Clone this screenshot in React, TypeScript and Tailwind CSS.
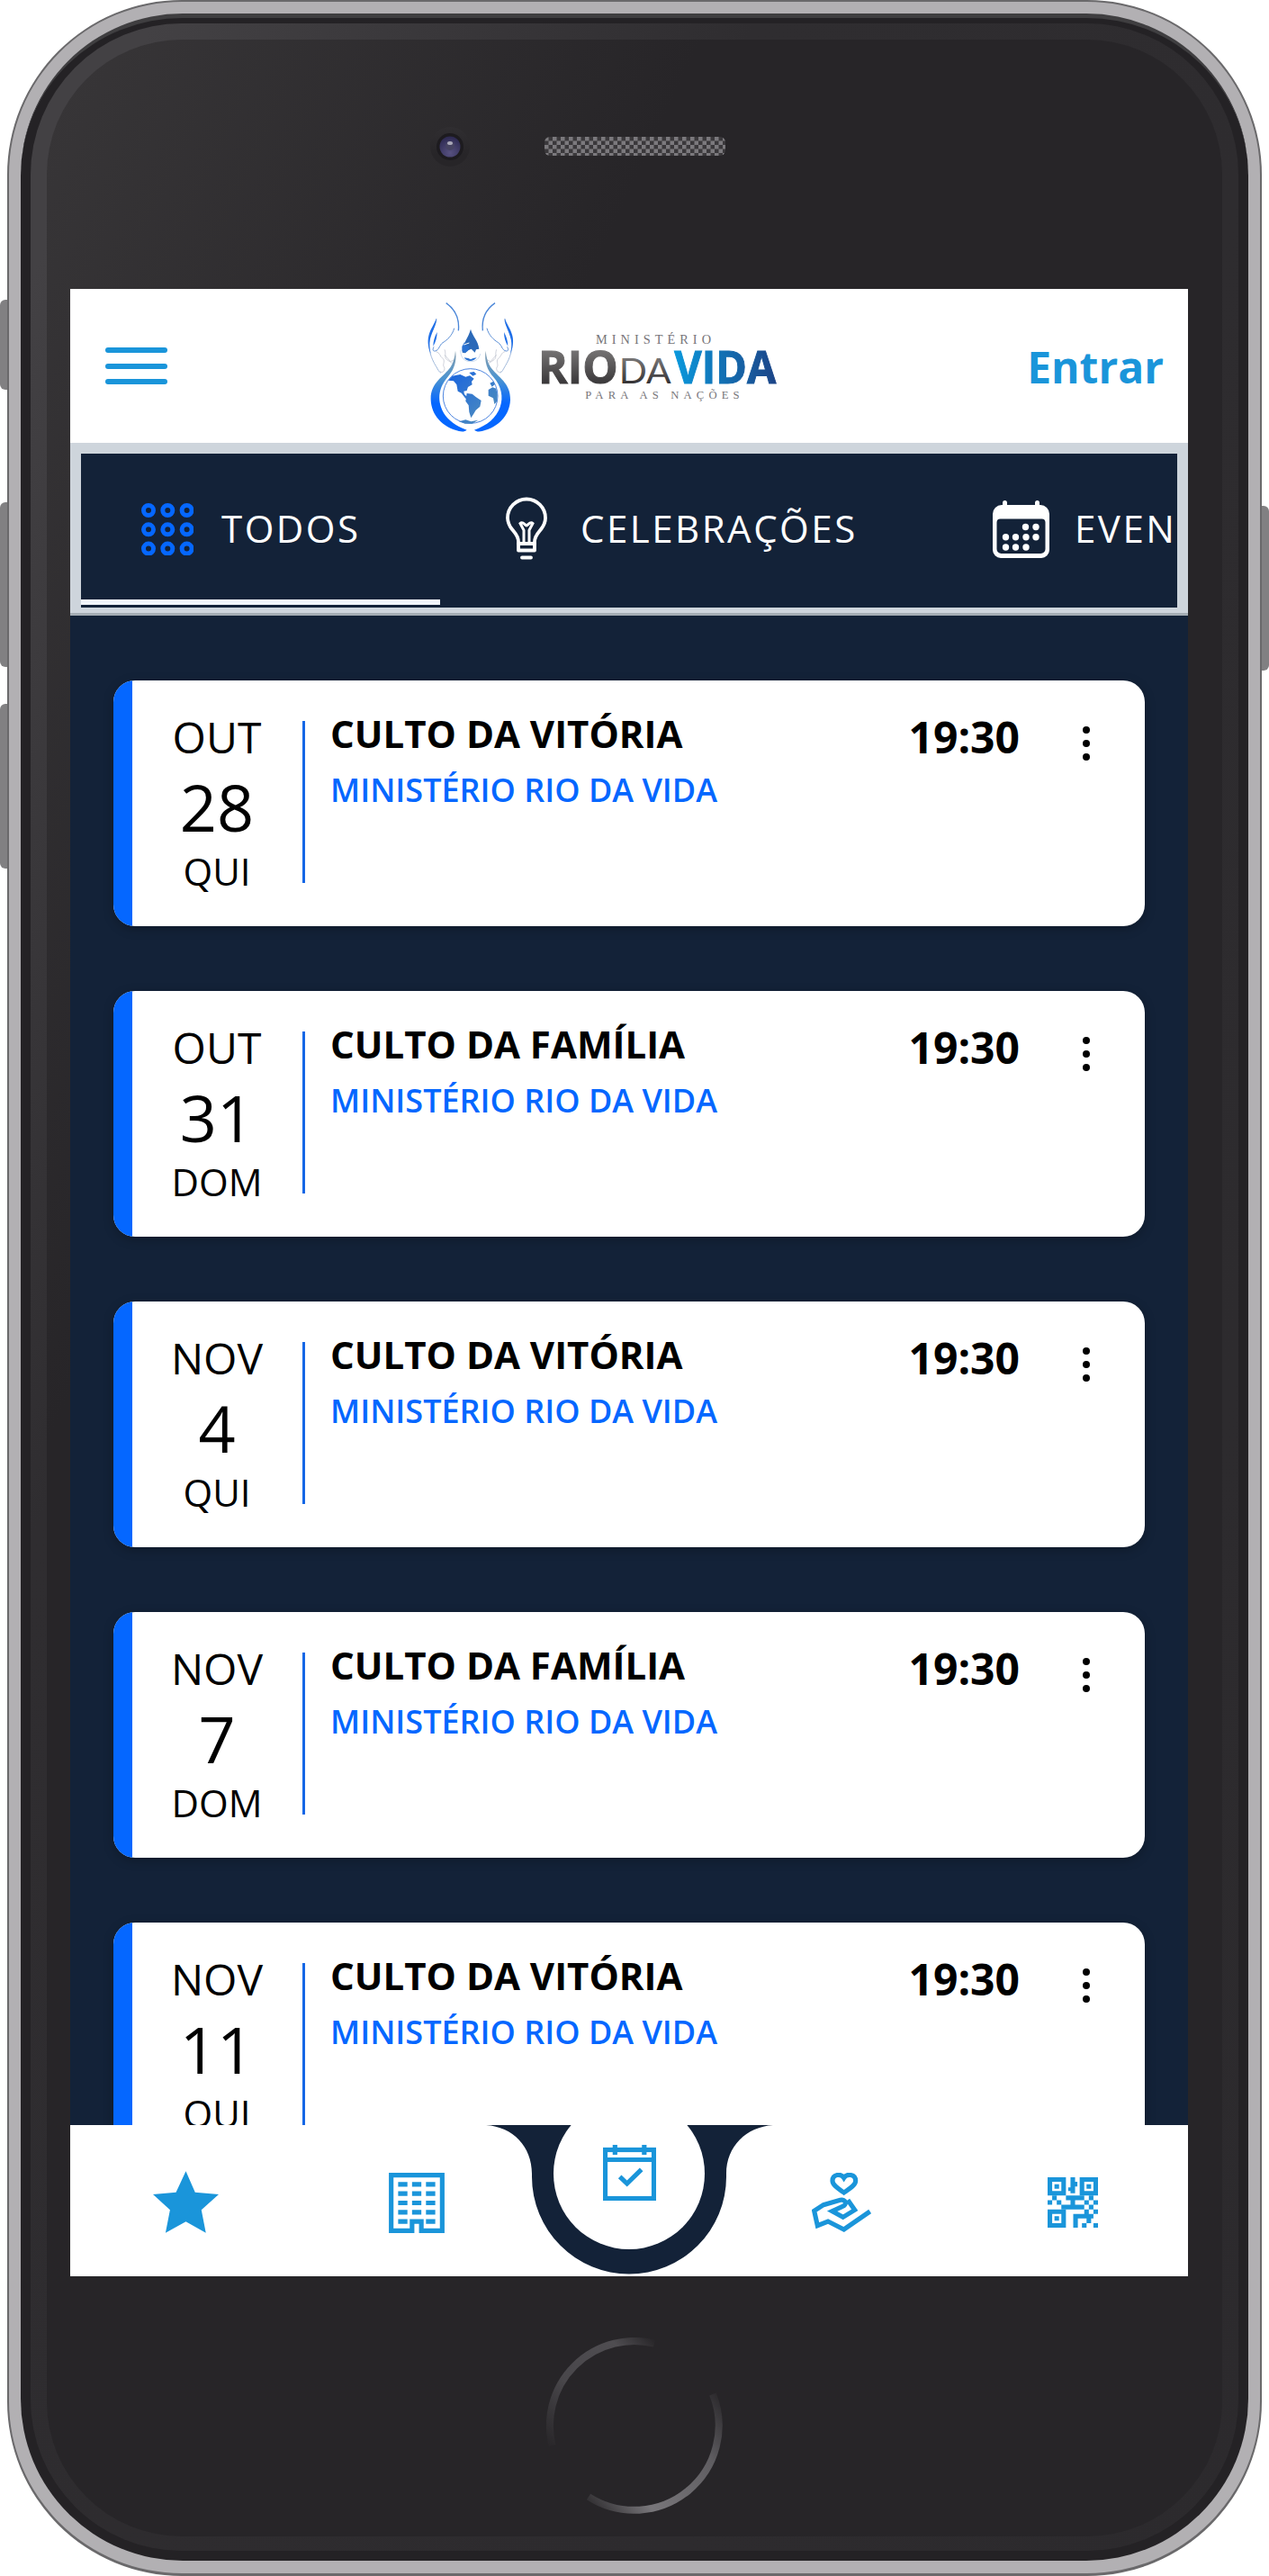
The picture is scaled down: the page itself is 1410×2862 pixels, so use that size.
import { ReactNode } from "react";
import clsx from "clsx";

interface ChurchEvent {
  month: string;
  day: number;
  weekday: string;
  title: string;
  place: string;
  time: string;
}

const PLACE = "MINISTÉRIO RIO DA VIDA";

const events: ChurchEvent[] = [
  { month: "OUT", day: 28, weekday: "QUI", title: "CULTO DA VITÓRIA", place: PLACE, time: "19:30" },
  { month: "OUT", day: 31, weekday: "DOM", title: "CULTO DA FAMÍLIA", place: PLACE, time: "19:30" },
  { month: "NOV", day: 4, weekday: "QUI", title: "CULTO DA VITÓRIA", place: PLACE, time: "19:30" },
  { month: "NOV", day: 7, weekday: "DOM", title: "CULTO DA FAMÍLIA", place: PLACE, time: "19:30" },
  { month: "NOV", day: 11, weekday: "QUI", title: "CULTO DA VITÓRIA", place: PLACE, time: "19:30" },
];

/* Icons */

function GridIcon() {
  const steps = [8, 29.3, 50.6];
  return (
    <svg viewBox="0 0 58.6 58.6" className="w-[58.6px] h-[58.6px]" fill="none" stroke="#0567ff" strokeWidth="5">
      {steps.map((cy) => steps.map((cx) => <circle key={`${cx}-${cy}`} cx={cx} cy={cy} r="5.5" />))}
    </svg>
  );
}

function BulbIcon() {
  return (
    <svg viewBox="0 0 48 72" className="w-12 h-[72px]" fill="none" stroke="#fff" strokeWidth="3.8" strokeLinecap="round">
      <path d="M15 58v-8c0-7-4-10-7.500-14.500A21 21 0 0 1 3 23.500a21 21 0 0 1 42 0c0 4-1.500 8-4.500 12S33 43 33 50v8" />
      <path d="M15 52h18M15 59.500h18M19 67.500h10" />
      <path d="M21 51V37l-4-7.500c3-3 5.500 2.500 7 2.500s4-5.500 7-2.500L27 37v14" strokeWidth="3" />
    </svg>
  );
}

function CalendarDotsIcon() {
  const dots = [
    [36.5, 29.5], [48, 29.5],
    [14.5, 40.7], [25.5, 40.7], [37, 40.7], [48, 40.7],
    [14.5, 52], [25.5, 52], [37, 52],
  ];
  return (
    <svg viewBox="0 0 63 65" className="w-[63px] h-[65px]" fill="#fff">
      <path
        fillRule="evenodd"
        d="M10 5h43a10 10 0 0 1 10 10v40a9 9 0 0 1-9 9H9a9 9 0 0 1-9-9V15A10 10 0 0 1 10 5zM8.500 20.500a4 4 0 0 0-4 4V54a5 5 0 0 0 5 5h44a5 5 0 0 0 5-5V24.500a4 4 0 0 0-4-4z"
      />
      <rect x="11" y="0" width="5" height="10" rx="2.5" />
      <rect x="47" y="0" width="5" height="10" rx="2.5" />
      {dots.map(([cx, cy]) => (
        <circle key={`${cx}-${cy}`} cx={cx} cy={cy} r="3.7" />
      ))}
    </svg>
  );
}

function StarIcon() {
  return (
    <svg viewBox="330 277 220 207" className="w-[73px] h-[69px]" fill="#1a95da">
      <path d="M440 277l31 71 79 7-58 52 15 77-67-38-68 38 15-77-57-52 77-7z" />
    </svg>
  );
}

function BuildingIcon() {
  return (
    <svg viewBox="0 0 12 13" className="w-[62px] h-[67px]" fill="#1a95da">
      <path fillRule="evenodd" d="M0 0h12v13H6.500v-2h-1v2H0zM1 1v11h3.500v-2h3v2H11V1z" />
      {[2, 4, 6, 8].map((y) => (
        <path key={y} d={`M2 ${y}h2v1H2zM5 ${y}h2v1H5zM8 ${y}h2v1H8z`} />
      ))}
      <path d="M2 10h2v1H2zM8 10h2v1H8z" />
    </svg>
  );
}

function CalendarCheckIcon() {
  return (
    <svg viewBox="508 189 177 186" className="w-[59px] h-[62px]" fill="none" stroke="#1a95da" strokeWidth="15.5">
      <rect x="515.5" y="205.5" width="162" height="162" />
      <path d="M515 238.500h163M548 189v33M645.500 189v33M564 295l24 23 48-47" />
    </svg>
  );
}

function GivingIcon() {
  return (
    <svg viewBox="127 282 198 198" className="w-[66px] h-[66px]" fill="none" stroke="#1a95da" strokeWidth="15.5">
      <path d="M234 348c-14-10-38-24-38-39 0-22 28-26 38-10 10-16 39-12 39 10 0 15-25 29-39 39z" />
      <path d="M321 411l-87 60-53-27-35 14-11-49 31-20 56-16c18-4 25 15 6 22l-33 15 36 20 39-24-23-33" />
    </svg>
  );
}

function QrIcon() {
  return (
    <svg viewBox="0 0 11 11" className="w-[56px] h-[56px]" fill="#1a95da">
      {["0 0", "7 0", "0 7"].map((at) => (
        <path
          key={at}
          transform={`translate(${at})`}
          fillRule="evenodd"
          d="M0 0h4v4H0zM1 1v2h2V1zM1.500 1.500h1v1h-1z"
        />
      ))}
      <path d="M5 0h1v1h.5v1H6v1.500H5V3h-.5V2.200H5z" />
      <path d="M1 4h1v1H1zM0 5h1v1H0zM2 5h1v1H2zM4 4h4v1H6v1h2v1H3V6h2V5H4z" />
      <path d="M9 4h1v1H9zM8 5h1v1H8zM10 5h1v1h-1zM9 6h1v1H9zM8 7h1v1h1v1h-.5v1h-1V9H6.600v2h-1V8H8zM10 7h1v1h-1z" />
      <path d="M7.500 10h1v1h-1zM10 10h1v1h-1z" />
    </svg>
  );
}

function Logo() {
  return (
    <svg viewBox="60 22 1200 480" className="w-[400px] h-[160px]">
      <defs>
        <linearGradient id="water" x1="0" y1="0" x2="0" y2="1">
          <stop offset="0" stopColor="#8aa0ae" />
          <stop offset="0.35" stopColor="#4b93d0" />
          <stop offset="0.65" stopColor="#0567ff" />
        </linearGradient>
        <linearGradient id="steel" x1="0" y1="0" x2="0" y2="1">
          <stop offset="0.2" stopColor="#7b7979" />
          <stop offset="0.85" stopColor="#333133" />
        </linearGradient>
        <linearGradient id="vida" x1="0" y1="0" x2="1" y2="0">
          <stop offset="0" stopColor="#0a98dc" />
          <stop offset="1" stopColor="#1c4487" />
        </linearGradient>
        <linearGradient id="land" x1="0" y1="0" x2="1" y2="1">
          <stop offset="0" stopColor="#1763e0" />
          <stop offset="1" stopColor="#5793b8" />
        </linearGradient>
        {/* One half of the emblem: arm, hand and water, mirrored for the other side */}
        <g id="half">
          <path d="M137 51c34 24 45 54 41 92" stroke="#4a86d8" strokeWidth="4" fill="none" />
          <path d="M105 103c-1 22-20 44-24 70-4 32 6 62 22 88 6 10 10 20 17 23" stroke="#8eabd2" strokeWidth="2.5" fill="none" />
          <path d="M104 102c4 20-20 50-22 82-1 14 2 28 5 38-9-18-13-42-8-62 5-22 20-40 25-58z" fill="#1f6fe8" />
          <path d="M107 148c0 16-4 32-13 47 0-17 5-32 13-47z" fill="#1f6fe8" />
          <path d="M164 135c-6 24-24 40-38 48-12 8-12 26-26 28-8 1-8-6-4-14" stroke="#5c8fd6" strokeWidth="3" fill="none" />
          <path d="M103 213c14 2 12 16 24 24 8 8-4 22 4 28 4 10-6 22-14 14M132 206c6 16-2 26 8 34l18 12M132 224l20 22 12-6" stroke="#b7bbc8" strokeWidth="2" fill="none" />
          <path
            d="M168 210c6 36-6 66-26 88-26 30-34 66-22 100 12 36 44 62 86 76-6 6-16 6-26 4-54-12-92-52-94-104-2-58 42-76 66-110 10-16 14-34 16-54z"
            fill="url(#water)"
          />
        </g>
      </defs>

      <use href="#half" />
      <use href="#half" transform="translate(437 0) scale(-1 1)" />

      {/* Drop */}
      <path d="M219 138c6 24 26 40 28 66l-10 2-4 10-12-12-14 6-6 8-10-2c0-30 20-48 28-78z" fill="#2b69b8" />
      <path d="M190 196l8-14 6 10 10 4-4 14-8 6-12-4zM197 233l14 2 8 4 8-4 12-2c-10 14-32 16-42 0z" fill="#2a72d2" />
      <path d="M196 190l18-6" stroke="#fff" strokeWidth="3" />
      <path d="M185 208c0 26 14 38 33 38s30-10 33-26" stroke="#9db9dd" strokeWidth="1.5" fill="none" />

      {/* Globe */}
      <circle cx="218" cy="361" r="91" fill="none" stroke="#2a6cd8" strokeWidth="2.5" />
      <path
        d="M158 294l26-5 18 8 14-4 14 10-8 10 2 10-14 8-4 12-10 2 2 10 12 12-8 2-14-18-12-6-4-22-10-12-18-2zM214 283l16-3 8 8-12 6zM206 352l18 2 12 10 18 12-4 20-14 12-8 14-8 12-6-20-2-22-10-14zM283 318l12-6 5 10-10 8zM278 340l14-8 12 4 4 22-2 22-8 8-4-20-16-8zM180 446l22-6 18 6 24-5-20 12h-24z"
        fill="url(#land)"
      />

      <g fontFamily="'Open Sans', sans-serif">
        <text x="444" y="318" fontSize="151" fontWeight="700" textLength="266" lengthAdjust="spacingAndGlyphs" fill="url(#steel)" stroke="url(#steel)" strokeWidth="3">
          RIO
        </text>
        <text x="713" y="319" fontSize="118" fontFamily="Lato, sans-serif" fontWeight="400" textLength="174" lengthAdjust="spacingAndGlyphs" fill="url(#steel)">
          DA
        </text>
        <text x="898" y="318" fontSize="151" fontWeight="700" textLength="339" lengthAdjust="spacingAndGlyphs" fill="url(#vida)" stroke="url(#vida)" strokeWidth="3">
          VIDA
        </text>
      </g>
      <g fontFamily="'Liberation Serif', serif" fill="#77757a">
        <text x="636" y="188" fontSize="43" textLength="384">
          MINISTÉRIO
        </text>
        <text x="601" y="371" fontSize="38" textLength="514">
          PARA AS NAÇÕES
        </text>
      </g>
    </svg>
  );
}

/* App screen */

function Header() {
  return (
    <header className="h-[171px] shrink-0 bg-white pl-[39px] pr-[27px] grid grid-cols-[353px_400px_1fr] items-center">
      <div className="w-[69px] flex flex-col gap-[11.5px]">
        <span className="h-[6px] rounded-full bg-[#1a95da]" />
        <span className="h-[6px] rounded-full bg-[#1a95da]" />
        <span className="h-[6px] rounded-full bg-[#1a95da]" />
      </div>
      <Logo />
      <a className="justify-self-end pt-[3px] text-[48px] leading-none font-bold text-[#1a95da]">Entrar</a>
    </header>
  );
}

interface TabProps {
  icon: ReactNode;
  label: string;
  className: string;
  active?: boolean;
}

function Tab({ icon, label, className, active }: TabProps) {
  return (
    <div
      className={clsx(
        "h-[168px] shrink-0 pl-[60px] flex items-center border-b-[6px]",
        active ? "border-[#f1f5fb]" : "border-transparent",
        className,
      )}
    >
      <div className="w-[72px] mt-[6px] flex justify-center">{icon}</div>
      <span className="ml-6 mt-[3px] text-[42px] leading-none tracking-[2.5px] text-white">{label}</span>
    </div>
  );
}

function Tabs() {
  return (
    <div className="shrink-0 h-[192px] bg-[#ced5dc] border-b-[3px] border-[#a4adb4] px-3 pt-3 pb-[6px]">
      <div className="h-[171px] bg-[#132238] flex overflow-hidden">
        <Tab icon={<GridIcon />} label="TODOS" className="w-[399px]" active />
        <Tab icon={<BulbIcon />} label="CELEBRAÇÕES" className="w-[549px]" />
        <Tab icon={<CalendarDotsIcon />} label="EVEN" className="w-[460px]" />
      </div>
    </div>
  );
}

function EventCard({ event }: { event: ChurchEvent }) {
  return (
    <div className="h-[273px] shrink-0 flex bg-white text-black rounded-[24px] overflow-hidden shadow-[0_3px_12px_rgba(0,0,0,0.25)]">
      <div className="w-[21px] bg-[#0567ff]" />
      {/* Date */}
      <div className="w-[189px] pt-8 pr-px text-center">
        <div className="text-[48px] leading-[62px]">{event.month}</div>
        <div className="text-[72px] leading-[92px]">{event.day}</div>
        <div className="text-[42px] leading-[51px]">{event.weekday}</div>
      </div>
      <div className="w-[3px] h-[180px] mt-[45px] bg-[#1567e6]" />
      {/* Details */}
      <div className="flex-1 pl-[28px] pt-[29px]">
        <div className="text-[42px] leading-[60px] font-bold">{event.title}</div>
        <div className="text-[36px] leading-[66px] font-semibold text-[#0567ff]">{event.place}</div>
      </div>
      <div className="pt-[33px] text-[48px] leading-[60px] font-bold">{event.time}</div>
      <div className="w-[8px] ml-[70px] mr-[61px] mt-[51px] flex flex-col gap-[7.5px]">
        <span className="size-[7.5px] rounded-full bg-black" />
        <span className="size-[7.5px] rounded-full bg-black" />
        <span className="size-[7.5px] rounded-full bg-black" />
      </div>
    </div>
  );
}

function BottomNav() {
  return (
    <nav className="relative h-[168px] shrink-0 bg-white flex">
      {/* Notch that holds the floating button */}
      <svg viewBox="0 0 319 168" className="absolute left-[462px] top-0 w-[319px] h-[168px]">
        <path d="M0 0c30 2 51 24 51 54v3.500a108 108 0 0 0 216 0V54c0-30 22-52 52-54z" fill="#132238" />
        <circle cx="159" cy="54" r="84" fill="#fff" />
      </svg>
      <div className="w-[257px] pt-[3px] flex items-center justify-center">
        <StarIcon />
      </div>
      <div className="w-[256px] pt-[4px] flex items-center justify-center">
        <BuildingIcon />
      </div>
      <div className="relative w-[216px] pt-[22px] flex items-start justify-center">
        <CalendarCheckIcon />
      </div>
      <div className="w-[256px] pt-[4px] flex items-center justify-center">
        <GivingIcon />
      </div>
      <div className="w-[257px] pt-[4px] flex items-center justify-center">
        <QrIcon />
      </div>
    </nav>
  );
}

function Screen() {
  return (
    <main className="w-[1242px] h-[2208px] flex flex-col overflow-hidden bg-[#132238]">
      <Header />
      <Tabs />
      <section className="flex-1 min-h-0 overflow-hidden px-12 pt-[72px] flex flex-col gap-[72px]">
        {events.map((event) => (
          <EventCard key={`${event.month}-${event.day}`} event={event} />
        ))}
      </section>
      <BottomNav />
    </main>
  );
}

/* Phone hardware */

function Camera() {
  return (
    <svg viewBox="0 0 44 44" className="size-11">
      <defs>
        <linearGradient id="rim" x1="0" y1="0" x2="0" y2="1">
          <stop offset="0" stopColor="#302e31" />
          <stop offset="0.7" stopColor="#272528" />
        </linearGradient>
        <radialGradient id="lens" cx="0.5" cy="0.8" r="0.8">
          <stop offset="0" stopColor="#575180" />
          <stop offset="1" stopColor="#2c2850" />
        </radialGradient>
      </defs>
      <circle cx="22" cy="22" r="22" fill="url(#rim)" />
      <circle cx="22" cy="22" r="15" fill="#1d1b1f" />
      <circle cx="22" cy="22" r="11.5" fill="url(#lens)" />
      <circle cx="22" cy="21" r="5" fill="#464362" />
      <ellipse cx="22" cy="18" rx="3" ry="2" fill="#a9a7b8" />
    </svg>
  );
}

function Speaker() {
  return (
    <svg viewBox="0 0 201 21" className="w-[201px] h-[21px]">
      <defs>
        <pattern id="mesh" width="9" height="9" patternUnits="userSpaceOnUse">
          <rect width="9" height="9" fill="#3a383b" />
          <rect width="4.5" height="4.5" fill="#7b797d" />
          <rect x="4.5" y="4.5" width="4.5" height="4.5" fill="#7b797d" />
        </pattern>
      </defs>
      <rect width="201" height="21" rx="6" fill="url(#mesh)" />
    </svg>
  );
}

function HomeButton() {
  return (
    <svg viewBox="0 0 196 196" className="size-[196px]" fill="none" strokeWidth="8">
      <defs>
        <linearGradient id="homeTop" gradientUnits="userSpaceOnUse" x1="118" y1="0" x2="0" y2="122">
          <stop offset="0" stopColor="#272528" />
          <stop offset="0.2" stopColor="#4f4d51" />
          <stop offset="0.6" stopColor="#49474b" />
          <stop offset="1" stopColor="#272528" />
        </linearGradient>
        <linearGradient id="homeBottom" gradientUnits="userSpaceOnUse" x1="190" y1="55" x2="44" y2="178">
          <stop offset="0" stopColor="#272528" />
          <stop offset="0.3" stopColor="#5f5d61" />
          <stop offset="0.75" stopColor="#78767a" />
          <stop offset="1" stopColor="#333134" />
        </linearGradient>
      </defs>
      <path d="M120 6.600A94 94 0 0 0 6.500 120" stroke="url(#homeTop)" />
      <path d="M185 63A94 94 0 0 1 47 177" stroke="url(#homeBottom)" />
    </svg>
  );
}

export default function App() {
  return (
    <div className="relative w-[1410px] h-[2862px] bg-white font-['Open_Sans',sans-serif]">
      {/* Side buttons */}
      <div className="absolute left-0 top-[333px] w-3 h-[100px] rounded-l-md bg-[#818082]" />
      <div className="absolute left-0 top-[558px] w-3 h-[183px] rounded-l-md bg-[#818082]" />
      <div className="absolute left-0 top-[782px] w-3 h-[183px] rounded-l-md bg-[#818082]" />
      <div className="absolute right-0 top-[562px] w-3 h-[183px] rounded-r-md bg-[#818082]" />

      <div className="relative ml-2 w-[1394px] h-[2862px] rounded-[194px] border-2 border-b-[3px] border-[#6a696b] bg-[#b2b0b3] px-[13px] pt-[13px] pb-[14px]">
        <div className="h-full rounded-[180px] border-t-[5px] border-[#3f3e40] bg-[#242225] px-[11px] pt-[6px] pb-[11px]">
          <div className="h-full rounded-[168px] bg-linear-to-br from-[#434144] from-5% via-[#2f2d30] via-30% to-[#2c2a2d] px-[18px] pt-[18px] pb-4">
            <div className="h-full rounded-[150px] bg-[#272528] bg-[linear-gradient(115deg,#383638_0%,#272528_28%)]">
              <div className="h-[277px] pl-[426px] pt-[97px] flex items-start gap-[83px]">
                <Camera />
                <div className="pt-[11px]">
                  <Speaker />
                </div>
              </div>
              <div className="pl-[26px]">
                <Screen />
              </div>
              <div className="pt-[68px] pl-[555px]">
                <HomeButton />
              </div>
            </div>
          </div>
        </div>
      </div>
    </div>
  );
}
